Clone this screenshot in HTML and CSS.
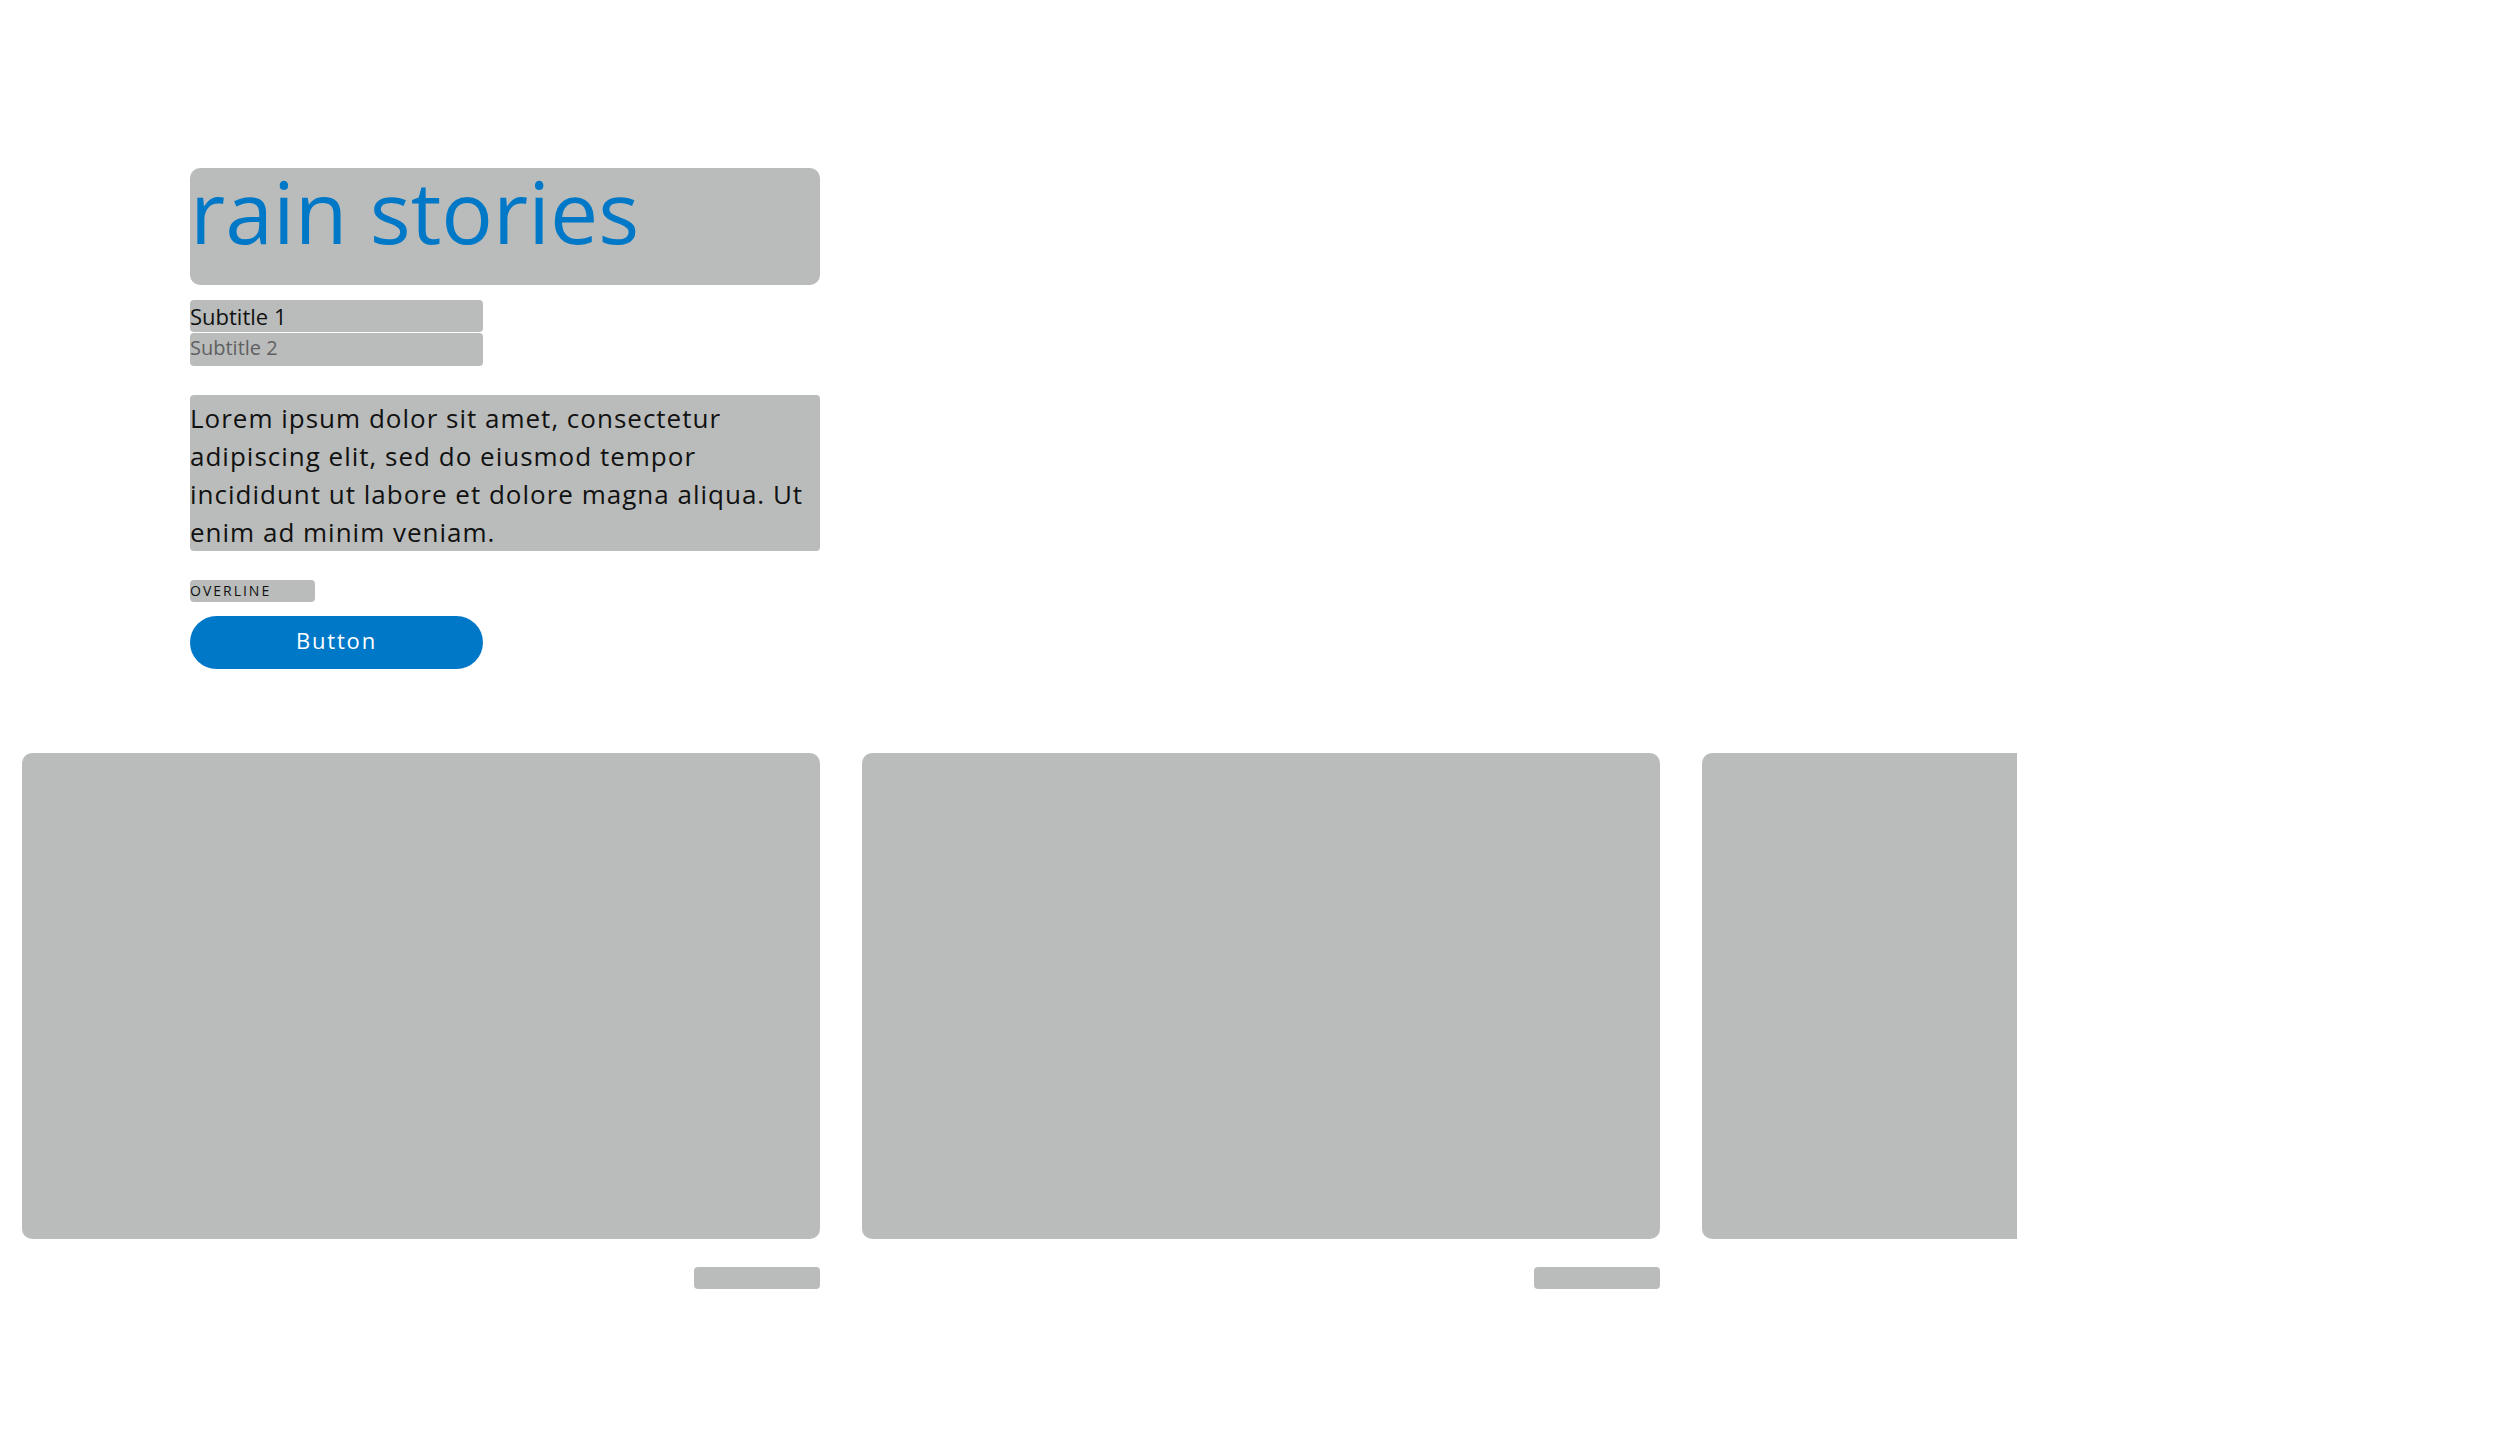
FILE: index.html
```html
<!DOCTYPE html>
<html lang="en">
<head>
  <meta charset="UTF-8">
  <meta name="viewport" content="width=device-width, initial-scale=1">
  <title>rain stories</title>
  <link rel="stylesheet" href="styles.css">
</head>
<body>
  <div class="intro">
    <h1 class="title">rain stories</h1>

    <div class="subtitles">
      <p class="subtitle-1">Subtitle 1</p>
      <p class="subtitle-2">Subtitle 2</p>
    </div>

    <p class="body-text">Lorem ipsum dolor sit amet, consectetur adipiscing elit, sed do eiusmod tempor incididunt ut labore et dolore magna aliqua. Ut enim ad minim veniam.</p>

    <span class="overline">OVERLINE</span>

    <button class="btn" type="button">Button</button>
  </div>

  <div class="carousel">
    <div class="track">
      <div class="slide">
        <div class="card"></div>
        <div class="caption"></div>
      </div>
      <div class="slide">
        <div class="card"></div>
        <div class="caption"></div>
      </div>
      <div class="slide">
        <div class="card"></div>
        <div class="caption"></div>
      </div>
    </div>
  </div>
</body>
</html>
```

FILE: styles.css
```css
body {
  margin: 0;
  background: #ffffff;
  font-family: 'Open Sans', 'Noto Sans', sans-serif;
  color: #111111;
}

p, h1 {
  margin: 0;
}

/* text blocks on grey placeholders */
.intro {
  display: flex;
  flex-direction: column;
  align-items: flex-start;
  padding: 168px 0 0 190px;
}

.title {
  width: 630px;
  box-sizing: border-box;
  padding-bottom: 31px;
  background: #babcbb;
  border-radius: 10px;
  color: #0078c8;
  font-size: 86px;
  font-weight: 400;
  line-height: 86px;
  letter-spacing: 0;
}

.subtitles {
  display: flex;
  flex-direction: column;
  gap: 1px;
  margin-top: 15px;
  width: 293px;
}

.subtitle-1 {
  background: #babcbb;
  border-radius: 4px;
  font-size: 22px;
  line-height: 32px;
  color: #111111;
}

.subtitle-2 {
  background: #babcbb;
  border-radius: 4px;
  font-size: 20px;
  line-height: 29px;
  padding-bottom: 4px;
  color: #5f6161;
}

.body-text {
  width: 630px;
  box-sizing: border-box;
  margin-top: 29px;
  padding-top: 4px;
  background: #babcbb;
  border-radius: 4px;
  font-size: 26px;
  line-height: 38px;
  letter-spacing: 1px;
}

.overline {
  display: block;
  width: 125px;
  margin-top: 29px;
  background: #babcbb;
  border-radius: 4px;
  font-size: 14px;
  font-weight: 500;
  line-height: 22px;
  letter-spacing: 2px;
}

.btn {
  width: 293px;
  height: 53px;
  margin-top: 14px;
  padding: 0 0 5px;
  border: none;
  border-radius: 27px;
  background: #0078c8;
  color: #ffffff;
  font-family: inherit;
  font-size: 22px;
  font-weight: 400;
  letter-spacing: 1.8px;
  cursor: pointer;
}

/* card carousel, last card cut off */
.carousel {
  width: 1995px;
  margin: 84px 0 0 22px;
  overflow: hidden;
}

.track {
  display: flex;
  gap: 42px;
}

.slide {
  flex: 0 0 798px;
  display: flex;
  flex-direction: column;
  align-items: flex-end;
}

.card {
  width: 100%;
  height: 486px;
  background: #babcbb;
  border-radius: 10px;
}

.caption {
  width: 126px;
  height: 22px;
  margin-top: 28px;
  background: #babcbb;
  border-radius: 4px;
}
```
